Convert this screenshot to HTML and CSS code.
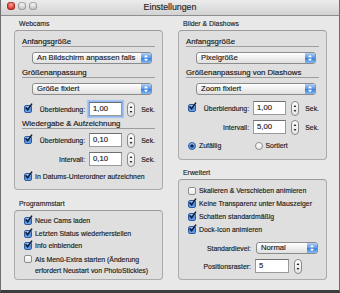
FILE: index.html
```html
<!DOCTYPE html>
<html>
<head>
    <title>Einstellungen</title>
    <link rel="stylesheet" href="styles.css">
</head>
<body>
<div class="window">
    <div class="titlebar">
        <div class="lights"><span class="light red"></span><span class="light"></span><span class="light"></span></div>
        <div class="title">Einstellungen</div>
        <div></div>
    </div>

    <div class="content">
        <div class="col">
            <div class="glabel">Webcams</div>
            <div class="box webcams">
                <div class="head mt7">Anfangsgröße</div>
                <div class="popup"><span class="ptext">An Bildschirm anpassen falls</span><span class="cap"><svg viewBox="0 0 10 10" width="10" height="10"><path d="M3 4.2L5 1.8L7 4.2Z M3 5.8L5 8.2L7 5.8Z" fill="#fff"/></svg></span></div>
                <div class="head mt5">Größenanpassung</div>
                <div class="popup"><span class="ptext">Größe fixiert</span><span class="cap"><svg viewBox="0 0 10 10" width="10" height="10"><path d="M3 4.2L5 1.8L7 4.2Z M3 5.8L5 8.2L7 5.8Z" fill="#fff"/></svg></span></div>

                <div class="row mt7">
                    <div class="lab"><span class="cb"><svg viewBox="0 0 9 9"><path d="M1.6 4.2L3.6 6.8L8 0.6" fill="none" stroke="#0e1c40" stroke-width="1.5"/></svg></span><span class="txt">Überblendung:</span></div>
                    <div class="field focus">1,00</div>
                    <span class="step"><svg viewBox="0 0 6 13"><path d="M1.6 5L3 3L4.4 5Z M1.6 8L3 10L4.4 8Z" fill="#222"/></svg></span>
                    <span class="unit">Sek.</span>
                </div>

                <div class="head mt4">Wiedergabe &amp; Aufzeichnung</div>
                <div class="row mt4">
                    <div class="lab"><span class="cb"><svg viewBox="0 0 9 9"><path d="M1.6 4.2L3.6 6.8L8 0.6" fill="none" stroke="#0e1c40" stroke-width="1.5"/></svg></span><span class="txt">Überblendung:</span></div>
                    <div class="field">0,10</div>
                    <span class="step"><svg viewBox="0 0 6 13"><path d="M1.6 5L3 3L4.4 5Z M1.6 8L3 10L4.4 8Z" fill="#222"/></svg></span>
                    <span class="unit">Sek.</span>
                </div>
                <div class="row mt5">
                    <div class="lab"><span class="txt">Intervall:</span></div>
                    <div class="field">0,10</div>
                    <span class="step"><svg viewBox="0 0 6 13"><path d="M1.6 5L3 3L4.4 5Z M1.6 8L3 10L4.4 8Z" fill="#222"/></svg></span>
                    <span class="unit">Sek.</span>
                </div>
                <div class="check mt6"><span class="cb"><svg viewBox="0 0 9 9"><path d="M1.6 4.2L3.6 6.8L8 0.6" fill="none" stroke="#0e1c40" stroke-width="1.5"/></svg></span><span>In Datums-Unterordner aufzeichnen</span></div>
            </div>

            <div class="glabel mt9">Programmstart</div>
            <div class="box start">
                <div class="check mt5"><span class="cb"><svg viewBox="0 0 9 9"><path d="M1.6 4.2L3.6 6.8L8 0.6" fill="none" stroke="#0e1c40" stroke-width="1.5"/></svg></span><span>Neue Cams laden</span></div>
                <div class="check tight"><span class="cb"><svg viewBox="0 0 9 9"><path d="M1.6 4.2L3.6 6.8L8 0.6" fill="none" stroke="#0e1c40" stroke-width="1.5"/></svg></span><span>Letzten Status wiederherstellen</span></div>
                <div class="check tight"><span class="cb"><svg viewBox="0 0 9 9"><path d="M1.6 4.2L3.6 6.8L8 0.6" fill="none" stroke="#0e1c40" stroke-width="1.5"/></svg></span><span>Info einblenden</span></div>
                <div class="check tight multi"><span class="cb off"></span><span>Als Menü-Extra starten (Änderung<br>erfordert Neustart von PhotoStickies)</span></div>
            </div>
        </div>

        <div class="col">
            <div class="glabel">Bilder &amp; Diashows</div>
            <div class="box bilder">
                <div class="head mt7">Anfangsgröße</div>
                <div class="popup"><span class="ptext">Pixelgröße</span><span class="cap"><svg viewBox="0 0 10 10" width="10" height="10"><path d="M3 4.2L5 1.8L7 4.2Z M3 5.8L5 8.2L7 5.8Z" fill="#fff"/></svg></span></div>
                <div class="head mt5">Größenanpassung von Diashows</div>
                <div class="popup"><span class="ptext">Zoom fixiert</span><span class="cap"><svg viewBox="0 0 10 10" width="10" height="10"><path d="M3 4.2L5 1.8L7 4.2Z M3 5.8L5 8.2L7 5.8Z" fill="#fff"/></svg></span></div>

                <div class="row mt6">
                    <div class="lab"><span class="cb"><svg viewBox="0 0 9 9"><path d="M1.6 4.2L3.6 6.8L8 0.6" fill="none" stroke="#0e1c40" stroke-width="1.5"/></svg></span><span class="txt">Überblendung:</span></div>
                    <div class="field">1,00</div>
                    <span class="step"><svg viewBox="0 0 6 13"><path d="M1.6 5L3 3L4.4 5Z M1.6 8L3 10L4.4 8Z" fill="#222"/></svg></span>
                    <span class="unit">Sek.</span>
                </div>
                <div class="row mt5">
                    <div class="lab"><span class="txt">Intervall:</span></div>
                    <div class="field">5,00</div>
                    <span class="step"><svg viewBox="0 0 6 13"><path d="M1.6 5L3 3L4.4 5Z M1.6 8L3 10L4.4 8Z" fill="#222"/></svg></span>
                    <span class="unit">Sek.</span>
                </div>
                <div class="radios mt7">
                    <div class="radio"><span class="rb on"></span><span>Zufällig</span></div>
                    <div class="radio"><span class="rb"></span><span>Sortiert</span></div>
                </div>
            </div>

            <div class="glabel mt8">Erweitert</div>
            <div class="box erweitert">
                <div class="check mt6"><span class="cb off"></span><span>Skalieren &amp; Verschieben animieren</span></div>
                <div class="check mt3"><span class="cb"><svg viewBox="0 0 9 9"><path d="M1.6 4.2L3.6 6.8L8 0.6" fill="none" stroke="#0e1c40" stroke-width="1.5"/></svg></span><span>Keine Transparenz unter Mauszeiger</span></div>
                <div class="check mt3"><span class="cb"><svg viewBox="0 0 9 9"><path d="M1.6 4.2L3.6 6.8L8 0.6" fill="none" stroke="#0e1c40" stroke-width="1.5"/></svg></span><span>Schatten standardmäßig</span></div>
                <div class="check mt3"><span class="cb"><svg viewBox="0 0 9 9"><path d="M1.6 4.2L3.6 6.8L8 0.6" fill="none" stroke="#0e1c40" stroke-width="1.5"/></svg></span><span>Dock-Icon animieren</span></div>
                <div class="row short mt7">
                    <div class="lab"><span class="txt">Standardlevel:</span></div>
                    <div class="popup small"><span class="ptext">Normal</span><span class="cap"><svg viewBox="0 0 10 10" width="10" height="10"><path d="M3 4.2L5 1.8L7 4.2Z M3 5.8L5 8.2L7 5.8Z" fill="#fff"/></svg></span></div>
                </div>
                <div class="row mt5">
                    <div class="lab"><span class="txt">Positionsraster:</span></div>
                    <div class="field">5</div>
                    <span class="step"><svg viewBox="0 0 6 13"><path d="M1.6 5L3 3L4.4 5Z M1.6 8L3 10L4.4 8Z" fill="#222"/></svg></span>
                </div>
            </div>
        </div>
    </div>
</div>
</body>
</html>
```

FILE: styles.css
```css
body {
    margin: 0;
    font-family: "Liberation Sans", Arial, sans-serif;
    color: #1a1a1a;
    background: #fff;
    -webkit-text-stroke: 0.15px;
}
.window {
    width: 340px;
    height: 293px;
    box-sizing: border-box;
    border: 1px solid #6e6e6e;
    border-top: none;
    border-bottom: 3px solid #3d3d3d;
    background: #e8e8e8;
}
.titlebar {
    height: 15px;
    border-bottom: 1px solid #8e8e8e;
    background: linear-gradient(#ececec, #d2d2d2);
    display: grid;
    grid-template-columns: 1fr auto 1fr;
}
.lights {
    display: flex;
    gap: 3.3px;
    padding: 2px 0 0 5.5px;
}
.light {
    width: 8px;
    height: 8px;
    border-radius: 50%;
    background: radial-gradient(circle at 50% 30%, #f6f6f6, #c4c4c4 65%, #a4a4a4);
    box-shadow: inset 0 0 0 0.6px #8a8a8a;
}
.light.red {
    background: radial-gradient(circle at 50% 35%, #ffa394, #d6392c 60%, #9c1a12);
    box-shadow: inset 0 0 0 0.6px #8c2018;
}
.title {
    font-size: 8.8px;
    line-height: 15px;
    color: #242424;
}
.content {
    display: flex;
    gap: 15px;
    padding: 3px 12px 0 13px;
}
.col {
    width: 149px;
}
.glabel {
    font-size: 6.9px;
    line-height: 10px;
    height: 10px;
    margin-bottom: 1px;
    padding-left: 5px;
    color: #262626;
}
.box {
    border: 1px solid #ababab;
    border-top-color: #9b9b9b;
    border-radius: 4px;
    background: #dfdfdf;
    padding: 0 7px;
}
.webcams { padding-bottom: 7px; }
.bilder { padding-bottom: 8px; }
.erweitert { padding-bottom: 6px; }
.start { padding-bottom: 3.5px; }

.head {
    font-size: 7.8px;
    line-height: 8px;
    height: 8px;
    border-bottom: 1px solid #9d9d9d;
    color: #161616;
}
.popup {
    display: flex;
    height: 12px;
    box-sizing: border-box;
    width: 120px;
    margin: 5px 0 0 10px;
    border: 1px solid #8c8c8c;
    border-radius: 3px;
    background: linear-gradient(#ffffff, #eeeeee 55%, #e0e0e0);
    overflow: hidden;
}
.popup.small {
    width: 62px;
    margin: 0 0 0 5px;
}
.ptext {
    flex: 1;
    font-size: 7.7px;
    line-height: 10px;
    padding-left: 4px;
    white-space: nowrap;
    overflow: hidden;
}
.cap {
    width: 10px;
    display: flex;
    align-items: center;
    justify-content: center;
    background: linear-gradient(#b0d0f6, #5b97e3 50%, #3a7ed8 52%, #86b8f2);
}
.cap svg { display: block; }

.row {
    display: flex;
    align-items: center;
    height: 14px;
    font-size: 6.9px;
}
.row.short { height: 12px; }
.lab {
    width: 65px;
    display: flex;
    align-items: center;
}
.lab .txt {
    margin-left: auto;
}
.field {
    width: 34px;
    height: 14px;
    box-sizing: border-box;
    margin-left: 4px;
    border: 1px solid #9a9a9a;
    border-top-color: #6f6f6f;
    background: #fff;
    font-size: 7.7px;
    line-height: 12px;
    padding-left: 3px;
}
.field.focus {
    box-shadow: 0 0 0 1px #8fb5ea, 0 0 1px 2px #a9c7f0;
}
.step {
    width: 8px;
    height: 15px;
    box-sizing: border-box;
    margin-left: 5px;
    border: 1px solid #8a8a8a;
    border-radius: 4px;
    background: linear-gradient(#ffffff, #e4e4e4);
}
.step svg {
    display: block;
    width: 6px;
    height: 13px;
}
.unit {
    margin-left: 6px;
}

.cb {
    width: 8px;
    height: 8px;
    box-sizing: border-box;
    flex: none;
    margin-left: 2px;
    border: 1px solid #2e5a9e;
    border-radius: 2px;
    background: linear-gradient(#a8cbf3, #4b88d8 50%, #6aa4e8);
}
.cb svg {
    display: block;
    width: 9px;
    height: 9px;
    margin: -3px 0 0 -1px;
    overflow: visible;
}
.cb.off {
    border-color: #8e8e8e;
    background: linear-gradient(#ffffff, #e8e8e8);
}
.check {
    display: flex;
    align-items: center;
    height: 10px;
    font-size: 6.9px;
    line-height: 10px;
}
.check .cb { margin-right: 3px; }
.check.multi {
    height: auto;
    align-items: flex-start;
    line-height: 11px;
}
.check.multi .cb { margin-top: 1.5px; }
.tight { margin-top: 2.5px; }

.radios {
    display: flex;
    height: 10px;
    font-size: 6.9px;
    line-height: 10px;
}
.radio {
    display: flex;
    align-items: center;
    width: 70px;
}
.rb {
    width: 8px;
    height: 8px;
    box-sizing: border-box;
    margin: 0 3px 0 2px;
    border-radius: 50%;
    border: 1px solid #8e8e8e;
    background: linear-gradient(#ffffff, #e6e6e6);
}
.rb.on {
    border-color: #2e5a9e;
    background: radial-gradient(circle, #13234a 0 1.3px, transparent 1.8px), linear-gradient(#a8cbf3, #4b88d8 50%, #6aa4e8);
}

.mt3 { margin-top: 3px; }
.mt4 { margin-top: 4px; }
.mt5 { margin-top: 5px; }
.mt6 { margin-top: 6px; }
.mt7 { margin-top: 7px; }
.mt8 { margin-top: 8px; }
.mt9 { margin-top: 9px; }
```
